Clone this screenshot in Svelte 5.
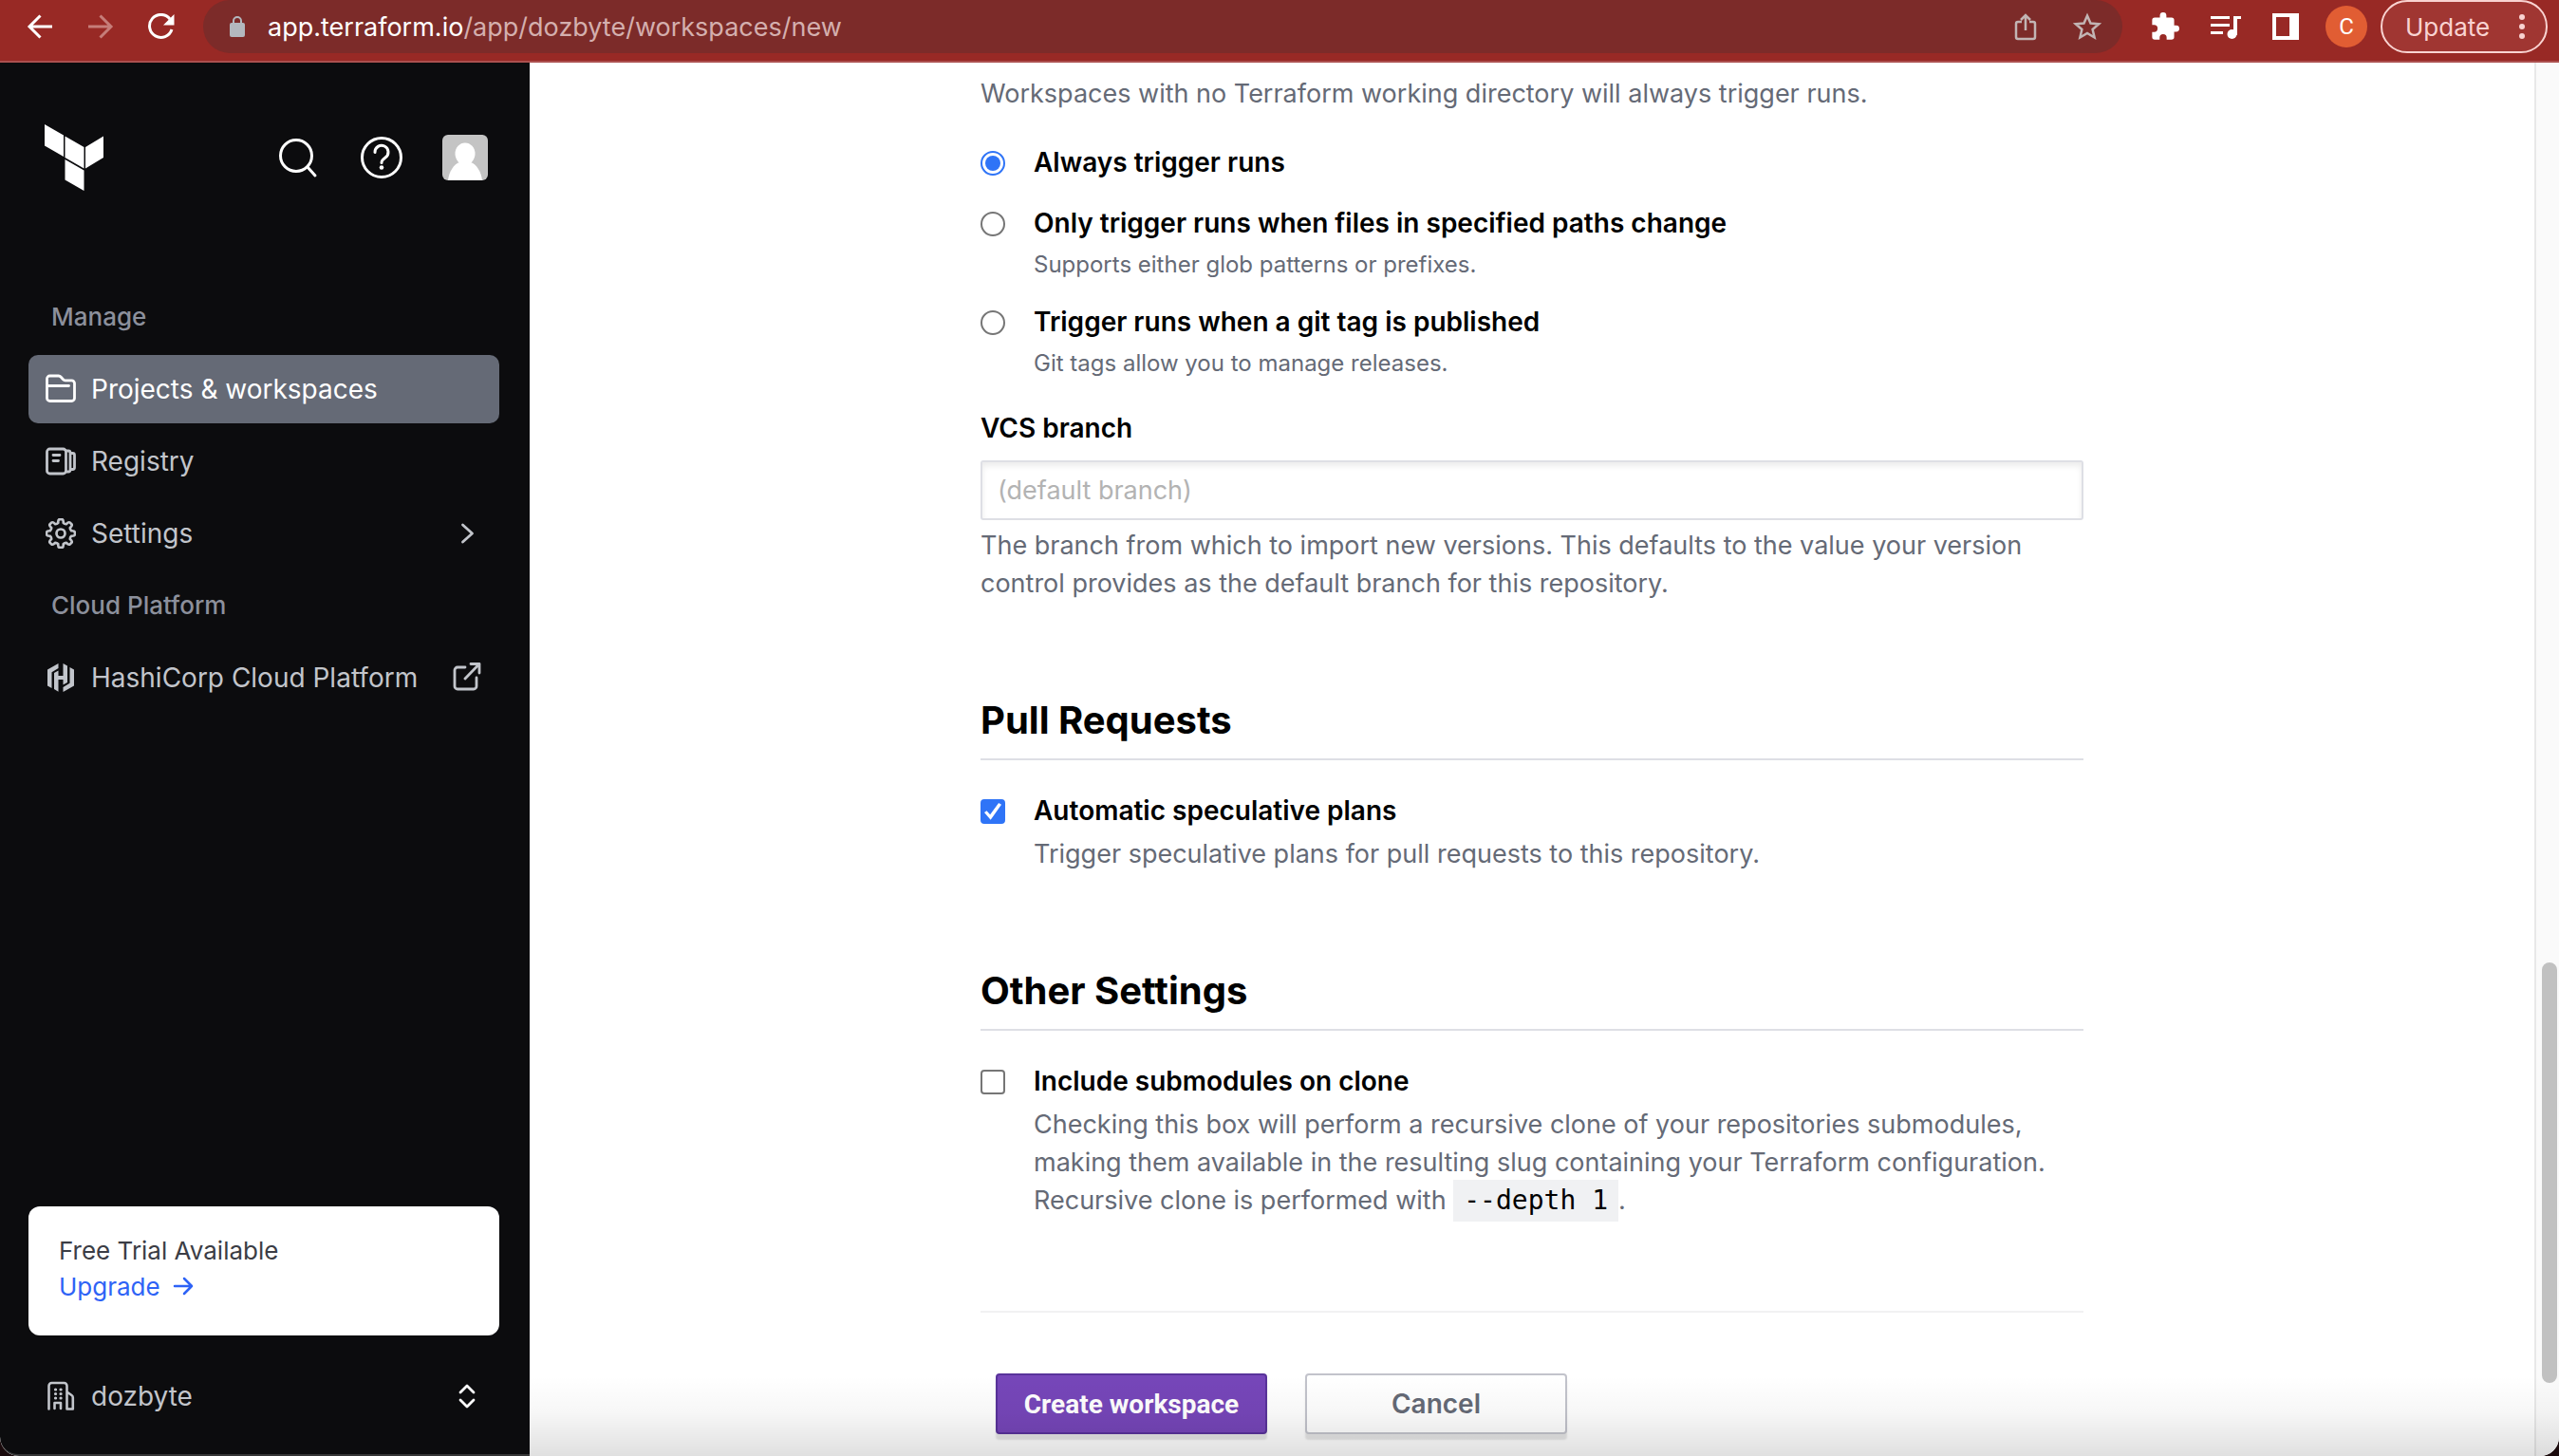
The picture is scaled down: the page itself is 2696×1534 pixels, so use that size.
<script>
  let trigger = $state('always');
  let speculative = $state(true);
  let submodules = $state(false);
  let branch = $state('');

  const triggers = [
    { id: 'always', label: 'Always trigger runs', help: '' },
    { id: 'paths', label: 'Only trigger runs when files in specified paths change', help: 'Supports either glob patterns or prefixes.' },
    { id: 'tag', label: 'Trigger runs when a git tag is published', help: 'Git tags allow you to manage releases.' }
  ];

  // Eight-toothed outline for the settings icon
  function gear(cx, cy, outer, inner) {
    const step = Math.PI / 4;
    const at = (r, a) => `${(cx + r * Math.sin(a)).toFixed(2)} ${(cy - r * Math.cos(a)).toFixed(2)}`;
    let d = '';
    for (let i = 0; i < 8; i++) {
      const a = i * step;
      d += `${i ? 'L' : 'M'}${at(inner, a - 0.24)}Q${at(outer, a - 0.2)} ${at(outer, a - 0.08)}L${at(outer, a + 0.08)}Q${at(outer, a + 0.2)} ${at(inner, a + 0.24)}Q${at(inner - 1, a + step / 2)} ${at(inner, a + step - 0.24)}`;
    }
    return d + 'Z';
  }
</script>

<div class="window">
  <header class="toolbar">
    <div class="history">
      <button class="icon" aria-label="Back">
        <svg width="28" height="28" viewBox="0 0 28 28" fill="none" stroke="#fff" stroke-width="3"><path d="M27 14H3M14.500 2.500L3 14l11.500 11.500" /></svg>
      </button>
      <button class="icon" aria-label="Forward">
        <svg width="28" height="28" viewBox="0 0 28 28" fill="none" stroke="#c67d79" stroke-width="3"><path d="M1 14h24M13.500 2.500L25 14 13.500 25.500" /></svg>
      </button>
      <button class="icon" aria-label="Reload">
        <svg width="28" height="28" viewBox="0 0 28 28" fill="none" stroke="#fff" stroke-width="3"><path d="M23 6A12 12 0 1 0 25 17" /><path d="M27.500 1v11.500H16z" fill="#fff" stroke="none" /></svg>
      </button>
    </div>
    <div class="address">
      <svg width="16" height="22" viewBox="0 0 16 22"><rect y="7" width="16" height="15" rx="2" fill="#b3b8be" /><path d="M4 8V5a4 4 0 0 1 8 0v3" fill="none" stroke="#b3b8be" stroke-width="2" /></svg>
      <span class="url"><b>app.terraform.io</b>/app/dozbyte/workspaces/new</span>
      <button class="icon share" aria-label="Share">
        <svg width="24" height="30" viewBox="0 0 24 30" fill="none" stroke="#c2b5b4" stroke-width="2.500"><path d="M8 10H4a2 2 0 0 0-2 2v14a2 2 0 0 0 2 2h16a2 2 0 0 0 2-2V12a2 2 0 0 0-2-2h-4M12 19V3M7 8l5-5 5 5" /></svg>
      </button>
      <button class="icon" aria-label="Bookmark">
        <svg width="30" height="30" viewBox="0 0 30 30" fill="none" stroke="#c2b5b4" stroke-width="2.500"><path d="M15 3.500l3.500 8 8.700.8-6.600 5.700 2 8.500-7.600-4.500-7.600 4.500 2-8.500-6.600-5.700 8.700-.8z" /></svg>
      </button>
    </div>
    <div class="tools">
      <button class="icon" aria-label="Extensions">
        <svg width="30" height="30" viewBox="0 0 22 22" fill="#fff"><path d="M19.500 10H18V6a2 2 0 0 0-2-2h-4V2.500a2.500 2.500 0 0 0-5 0V4H3a2 2 0 0 0-2 2v3.800h1.500a2.700 2.700 0 0 1 0 5.400H1V19a2 2 0 0 0 2 2h3.800v-1.500a2.700 2.700 0 0 1 5.400 0V21H16a2 2 0 0 0 2-2v-4h1.500a2.500 2.500 0 0 0 0-5z" /></svg>
      </button>
      <button class="icon" aria-label="Media">
        <svg width="34" height="28" viewBox="0 0 34 28" fill="#fff"><path d="M1 3h20v3H1zM1 11h20v3H1zM1 19h13v3H1zM25 3h8v3h-4v17h-4z" /><circle cx="23.500" cy="22" r="5" /></svg>
      </button>
      <button class="icon" aria-label="Side panel">
        <svg width="28" height="28" viewBox="0 0 28 28"><path d="M0 0h28v28H0zM4 4v20h14V4z" fill="#fff" fill-rule="evenodd" /></svg>
      </button>
      <button class="profile" aria-label="Profile">C</button>
      <button class="update">
        <span>Update</span>
        <svg width="6" height="28" viewBox="0 0 6 28" fill="#f9d3d1"><circle cx="3" cy="4" r="3" /><circle cx="3" cy="14" r="3" /><circle cx="3" cy="24" r="3" /></svg>
      </button>
    </div>
  </header>

  <div class="body">
    <aside class="sidebar">
      <div class="brand">
        <a href="/" aria-label="Terraform" class="logo">
          <svg width="62" height="70" viewBox="0 0 62 70" fill="#fff"><path d="M0 0l20 11.500v22.500L0 22.500zM21.500 12.500L41.500 24v22.500l-20-11.500zM43 24l19-11.500v22.500L43 46.500zM21.500 37l20 11.500V70l-20-11.500z" /></svg>
        </a>
        <button class="icon" aria-label="Search">
          <svg width="44" height="44" viewBox="0 0 44 44" fill="none" stroke="#fff" stroke-width="3" stroke-linecap="round"><circle cx="20" cy="20" r="16.500" /><path d="M32 32l8 9" /></svg>
        </button>
        <button class="icon" aria-label="Help">
          <svg width="46" height="46" viewBox="0 0 46 46" fill="none" stroke="#fff" stroke-width="3" stroke-linecap="round"><circle cx="24" cy="23" r="20.500" /><path d="M17 17.500a7 7 0 1 1 11 5.500c-2.500 1.800-4 3-4 5.500" /><circle cx="24" cy="33.500" r="2.300" fill="#fff" stroke="none" /></svg>
        </button>
        <button class="icon" aria-label="Account">
          <svg width="48" height="48" viewBox="0 0 48 48"><rect width="48" height="48" rx="6" fill="#c4c4c4" /><ellipse cx="24" cy="20" rx="10.500" ry="11.500" fill="#fff" /><path d="M6 48c1-9 6-17 12-19h12c6 2 11 10 12 19z" fill="#fff" /></svg>
        </button>
      </div>

      <nav>
        <h3>Manage</h3>
        <a class="item active" href="/workspaces">
          <svg width="32" height="32" viewBox="0 0 32 32" fill="none" stroke="currentColor" stroke-width="2.800" stroke-linecap="round" stroke-linejoin="round"><path d="M1.500 12.500V5a3 3 0 0 1 3-3h9.300a3 3 0 0 1 2.200 1l2.500 2.800a3 3 0 0 0 2.200 1h6.800a3 3 0 0 1 3 3V25.500a3 3 0 0 1-3 3h-23a3 3 0 0 1-3-3zH24.500" /></svg>
          <span>Projects &amp; workspaces</span>
        </a>
        <a class="item" href="/registry">
          <svg width="32" height="32" viewBox="0 0 32 32" fill="none" stroke="currentColor" stroke-width="2.800" stroke-linecap="round" stroke-linejoin="round"><path d="M4.500 3h14a3 3 0 0 1 3 3v20a3 3 0 0 1-3 3h-14a3 3 0 0 1-3-3V6a3 3 0 0 1 3-3zM8 9.500h7M8 15.500h5.500M22 5h2a2 2 0 0 1 2 2v18a2 2 0 0 1-2 2h-2M26.500 7.500h2a2 2 0 0 1 2 2v13a2 2 0 0 1-2 2h-2" /></svg>
          <span>Registry</span>
        </a>
        <a class="item" href="/settings">
          <svg width="32" height="32" viewBox="0 0 32 32" fill="none" stroke="currentColor" stroke-width="2.700" stroke-linejoin="round"><path d={gear(16, 16, 15, 11.5)} /><circle cx="16" cy="16" r="4.500" /></svg>
          <span>Settings</span>
          <svg class="end" width="32" height="32" viewBox="0 0 32 32" fill="none" stroke="currentColor" stroke-width="2.800" stroke-linecap="round" stroke-linejoin="round"><path d="M11.500 7l10 9-10 9" /></svg>
        </a>
        <h3>Cloud Platform</h3>
        <a class="item" href="/hcp">
          <svg width="32" height="32" viewBox="0 0 32 32" fill="currentColor"><path d="M13.500 1L2 7.500v17l4.500 2.500V10.200L13.500 6zM18.500 1v13h-5V8.500L9 11v17l4.500 2.800V18h5v5.500L23 21V3.600zM25.500 5v16.800L18.500 26v5L30 24.500v-17z" /></svg>
          <span>HashiCorp Cloud Platform</span>
          <svg class="end" width="32" height="32" viewBox="0 0 32 32" fill="none" stroke="currentColor" stroke-width="2.800" stroke-linecap="round" stroke-linejoin="round"><path d="M14 5H6a3 3 0 0 0-3 3v17a3 3 0 0 0 3 3h17a3 3 0 0 0 3-3v-9M20 1.500h9V11M29 1.500L14 17" /></svg>
        </a>
      </nav>

      <div class="trial">
        <span>Free Trial Available</span>
        <a href="/upgrade">Upgrade
          <svg width="22" height="20" viewBox="0 0 22 20" fill="none" stroke="currentColor" stroke-width="2.500" stroke-linecap="round" stroke-linejoin="round"><path d="M2 10h18M12 2l8 8-8 8" /></svg>
        </a>
      </div>
      <button class="item org">
        <svg width="32" height="32" viewBox="0 0 32 32" fill="none" stroke="currentColor" stroke-width="2.600" stroke-linecap="round" stroke-linejoin="round"><path d="M3.500 29.500V5a3 3 0 0 1 3-3h13a3 3 0 0 1 3 3v24.500M22.500 11.500l5 3.500a3 3 0 0 1 1.300 2.500v12h-6.300M9.500 29v-6h6.500v6" /><path d="M10.500 9h.1M16 9h.1M10.500 13.500h.1M16 13.500h.1M10.500 18h.1M16 18h.1" stroke-width="3.200" /></svg>
        <span>dozbyte</span>
        <svg class="end" width="32" height="32" viewBox="0 0 32 32" fill="none" stroke="#fff" stroke-width="2.800" stroke-linecap="round" stroke-linejoin="round"><path d="M9 12l7-7 7 7M9 20l7 7 7-7" /></svg>
      </button>
    </aside>

    <main>
      <form onsubmit={(e) => e.preventDefault()}>
        <p class="help">Workspaces with no Terraform working directory will always trigger runs.</p>

        <div class="triggers" role="radiogroup" aria-label="Run triggering">
          {#each triggers as option (option.id)}
            <div class="choice">
              <input type="radio" id={option.id} name="trigger" value={option.id} bind:group={trigger} />
              <div class="text tight">
                <label for={option.id}>{option.label}</label>
                {#if option.help}<p class="small">{option.help}</p>{/if}
              </div>
            </div>
          {/each}
        </div>

        <div class="field">
          <label for="branch">VCS branch</label>
          <input id="branch" type="text" placeholder="(default branch)" bind:value={branch} />
          <p class="help">The branch from which to import new versions. This defaults to the value your version control provides as the default branch for this repository.</p>
        </div>

        <section>
          <h2>Pull Requests</h2>
          <div class="choice">
            <input type="checkbox" id="speculative" bind:checked={speculative} />
            <div class="text">
              <label for="speculative">Automatic speculative plans</label>
              <p class="help">Trigger speculative plans for pull requests to this repository.</p>
            </div>
          </div>
        </section>

        <section>
          <h2>Other Settings</h2>
          <div class="choice">
            <input type="checkbox" id="submodules" bind:checked={submodules} />
            <div class="text">
              <label for="submodules">Include submodules on clone</label>
              <p class="help">Checking this box will perform a recursive clone of your repositories submodules, making them available in the resulting slug containing your Terraform configuration. Recursive clone is performed with <code>--depth 1</code>.</p>
            </div>
          </div>
        </section>

        <div class="actions">
          <button class="primary" type="submit">Create workspace</button>
          <button class="secondary" type="button">Cancel</button>
        </div>
      </form>
    </main>

    <div class="track"><div class="thumb"></div></div>
    <div class="fade"></div>
  </div>
</div>

<style>
  :global(body) {
    margin: 0;
    background: #1a0a0c;
  }
  .window {
    display: flex;
    flex-direction: column;
    height: 100vh;
    overflow: hidden;
    font-family: Inter, "Liberation Sans", sans-serif;
    font-size: 27px;
    color: #000;
    border-radius: 0 0 20px 20px;
  }
  button {
    font: inherit;
    cursor: pointer;
  }
  .icon {
    display: flex;
    padding: 0;
    border: 0;
    background: none;
  }
  svg {
    flex: none;
  }
  h2, h3, p {
    margin: 0;
  }

  .toolbar {
    display: flex;
    align-items: flex-start;
    flex: none;
    height: 64px;
    border-bottom: 2px solid #ac504f;
    background: #982925;
  }
  .history {
    display: flex;
    align-items: center;
    gap: 36px;
    height: 56px;
    padding: 0 30px 0 28px;
  }
  .address {
    display: flex;
    align-items: center;
    flex: 1;
    height: 56px;
    padding: 0 22px 0 28px;
    border-radius: 28px;
    background: #7c2b29;
  }
  .url {
    flex: 1;
    margin-left: 24px;
    color: #d4afae;
  }
  .url b {
    font-weight: 400;
    color: #fff;
  }
  .share {
    margin-right: 38px;
  }
  .tools {
    display: flex;
    align-items: center;
    gap: 32px;
    height: 56px;
    padding: 0 12px 0 30px;
  }
  .profile {
    width: 44px;
    height: 44px;
    margin-left: -4px;
    padding: 0;
    border: 0;
    border-radius: 50%;
    background: #e15d33;
    color: #fff;
    font-family: Roboto, sans-serif;
    font-size: 24px;
  }
  .update {
    display: flex;
    align-items: center;
    justify-content: space-between;
    width: 176px;
    height: 56px;
    margin-left: -18px;
    padding: 0 22px 0 24px;
    border: 2px solid #f9d3d1;
    border-radius: 28px;
    background: #a03632;
    color: #f9d3d1;
    font-size: 26px;
  }

  .body {
    position: relative;
    display: flex;
    flex: 1;
    min-height: 0;
    background: #fff;
  }
  .sidebar {
    display: flex;
    flex-direction: column;
    flex: none;
    box-sizing: border-box;
    width: 558px;
    padding: 65px 32px 25px 30px;
    border-bottom: 2px solid #353536;
    border-radius: 0 0 0 20px;
    background: #0c0c0e;
  }
  .brand {
    display: flex;
    align-items: center;
    gap: 42px;
    margin-bottom: 97px;
    padding: 0 12px 0 17px;
  }
  .logo {
    display: flex;
    flex: 1;
  }
  nav {
    display: flex;
    flex-direction: column;
    gap: 4px;
  }
  h3 {
    padding: 0 24px;
    font-size: 26px;
    font-weight: 500;
    line-height: 72px;
    color: #8c909c;
  }
  .item {
    display: flex;
    align-items: center;
    gap: 16px;
    height: 72px;
    padding: 0 18px;
    border: 0;
    border-radius: 10px;
    background: none;
    color: #c2c5cb;
    font-size: 28px;
    text-align: left;
    text-decoration: none;
  }
  .item.active {
    background: #656a76;
    color: #fff;
  }
  .end {
    margin-left: auto;
  }
  .trial {
    display: flex;
    flex-direction: column;
    margin-top: auto;
    padding: 28px 32px 32px;
    border-radius: 12px;
    background: #fff;
    color: #3b3d45;
    font-size: 26px;
    line-height: 38px;
  }
  .trial a {
    color: #2e63f6;
    text-decoration: none;
  }
  .trial svg {
    margin-left: 6px;
  }
  .org {
    margin-top: 28px;
  }

  main {
    flex: 1;
    min-width: 0;
    padding: 13px 40px 0;
    overflow: hidden;
  }
  form {
    max-width: 1162px;
    margin: 0 auto;
  }
  .help {
    line-height: 40px;
    color: #656a76;
  }
  .small {
    font-size: 24px;
    line-height: 32px;
    color: #656a76;
  }
  label {
    display: block;
    font-size: 28px;
    font-weight: 600;
    line-height: 40px;
  }
  .triggers {
    display: flex;
    flex-direction: column;
    gap: 24px;
    margin-top: 32px;
  }
  .choice {
    display: flex;
    align-items: flex-start;
    gap: 30px;
  }
  .choice input {
    display: grid;
    place-items: center;
    flex: none;
    box-sizing: border-box;
    width: 26px;
    height: 26px;
    margin: 8px 0 0;
    border: 2px solid #767676;
    border-radius: 4px;
    background: #fff;
    appearance: none;
  }
  .choice input[type='radio'] {
    border-radius: 50%;
  }
  .choice input:checked {
    border-color: #2f74f7;
  }
  .choice input[type='radio']:checked::before {
    content: '';
    width: 16px;
    height: 16px;
    border-radius: 50%;
    background: #2f74f7;
  }
  .choice input[type='checkbox']:checked {
    background: #2f74f7;
  }
  .choice input[type='checkbox']:checked::before {
    content: '';
    width: 18px;
    height: 18px;
    background: #fff;
    clip-path: polygon(0 56%, 14% 46%, 34% 68%, 84% 0, 100% 10%, 37% 98%);
  }
  .text {
    display: flex;
    flex-direction: column;
    gap: 6px;
  }
  .tight {
    gap: 8px;
  }
  .field {
    margin-top: 32px;
  }
  .field input {
    display: block;
    box-sizing: border-box;
    width: 100%;
    height: 63px;
    margin: 14px 0 7px;
    padding: 0 16px;
    border: 2px solid #dedfe5;
    border-radius: 3px;
    background: #fff;
    box-shadow: inset 0 4px 6px rgba(0, 0, 0, 0.08);
    color: #000;
    font: inherit;
  }
  .field input::placeholder {
    color: #b3b3b3;
  }
  section {
    margin-top: 100px;
  }
  h2 {
    margin-bottom: 33px;
    padding-bottom: 16px;
    border-bottom: 2px solid #dedfe5;
    font-size: 40px;
    font-weight: 700;
    line-height: 48px;
  }
  code {
    display: inline-block;
    margin: -6px 0;
    padding: 6px 11px;
    background: #f0f1f3;
    color: #000;
    font-family: "DejaVu Sans Mono", monospace;
    font-size: 28px;
    line-height: 32px;
  }
  .actions {
    display: flex;
    gap: 40px;
    margin-top: 96px;
    padding: 64px 16px 0;
    border-top: 2px solid #f1f1f2;
  }
  .actions button {
    height: 64px;
    border-radius: 4px;
    font-size: 28px;
    box-shadow: 0 6px 2px rgba(0, 0, 0, 0.1);
  }
  .primary {
    width: 286px;
    padding: 0;
    border: 2px solid #59339a;
    background: #7646b9;
    color: #fff;
    font-family: Roboto, sans-serif;
    font-weight: 700;
  }
  .secondary {
    width: 276px;
    border: 2px solid #c2c3cb;
    background: #fff;
    color: #656a76;
    font-weight: 600;
  }

  .track {
    flex: none;
    box-sizing: border-box;
    width: 26px;
    padding: 948px 2px 0 6px;
    border-left: 2px solid #e8e8e8;
    background: #fafafa;
  }
  .thumb {
    height: 443px;
    border-radius: 8px;
    background: #c1c1c1;
  }
  .fade {
    position: absolute;
    right: 0;
    bottom: 0;
    left: 558px;
    height: 84px;
    background: linear-gradient(rgba(0, 0, 0, 0), rgba(0, 0, 0, 0.03) 45%, rgba(0, 0, 0, 0.12));
    pointer-events: none;
  }
</style>
